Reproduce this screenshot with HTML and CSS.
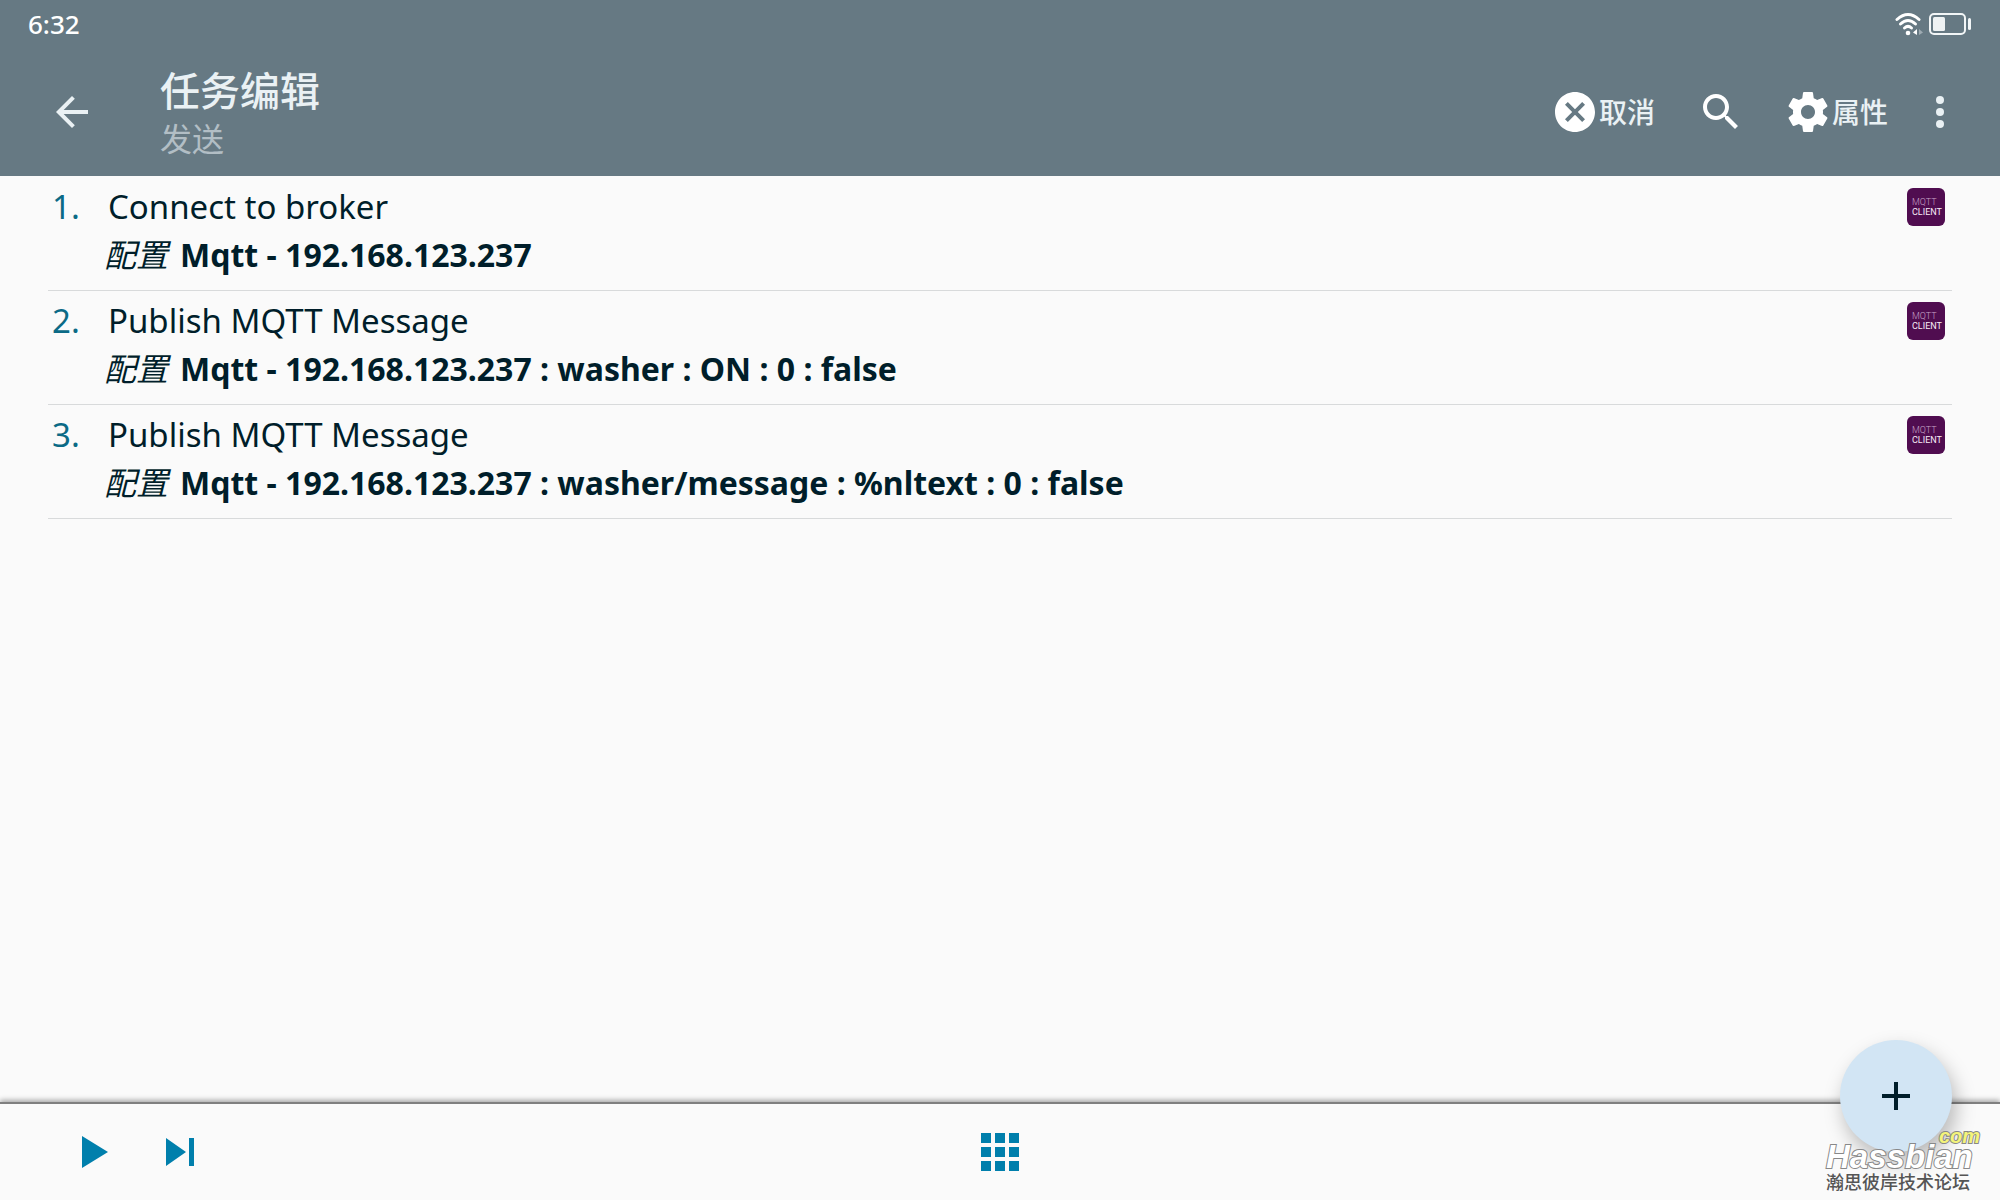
FILE: index.html
```html
<!DOCTYPE html>
<html lang="zh-CN">
<head>
<meta charset="utf-8">
<meta name="viewport" content="width=device-width, initial-scale=1">
<title>任务编辑</title>
<link rel="stylesheet" href="styles.css">
</head>
<body>
<header class="header">
  <div class="status">
    <time class="clock">6:32</time>
    <div class="status-icons">
      <svg class="wifi" width="28" height="24" viewBox="0 0 28 24" aria-hidden="true">
        <g fill="none" stroke="#fff" stroke-width="3" stroke-linecap="round">
          <path d="M2 7.500Q13 -2.500 24 7.500"/>
          <path d="M5.500 12Q13 5 20.500 12"/>
          <path d="M9.500 16Q13 12.800 16.500 16"/>
        </g>
        <circle cx="13" cy="21" r="2.300" fill="#fff"/>
        <path d="M18 20.500l4-3.500v6z" fill="#fff"/>
        <path d="M24 17l4 3.500-4 2.500z" fill="#9eabb2"/>
      </svg>
      <svg class="battery" width="43" height="24" viewBox="0 0 43 24" aria-hidden="true">
        <rect x="1" y="2" width="35" height="20" rx="4" fill="none" stroke="#f2f6f7" stroke-width="2"/>
        <rect x="4" y="5" width="12" height="14" rx="1.500" fill="#eef2f3"/>
        <rect x="39" y="6" width="3" height="12" rx="1.500" fill="#f2f6f7"/>
      </svg>
    </div>
  </div>
  <div class="toolbar">
    <button class="icon-btn back" aria-label="返回">
      <svg width="32" height="32" viewBox="4 4 16 16"><path fill="#eaf1f4" d="M20 11H7.830l5.590-5.590L12 4l-8 8 8 8 1.410-1.410L7.830 13H20z"/></svg>
    </button>
    <div class="titles">
      <h1 class="title">任务编辑</h1>
      <p class="subtitle">发送</p>
    </div>
    <nav class="actions">
      <button class="action">
        <svg width="40" height="40" viewBox="2 2 20 20" aria-hidden="true"><path fill="#fff" d="M12 2C6.470 2 2 6.470 2 12s4.470 10 10 10 10-4.470 10-10S17.530 2 12 2zm5 13.590L15.590 17 12 13.410 8.410 17 7 15.590 10.590 12 7 8.410 8.410 7 12 10.590 15.590 7 17 8.410 13.410 12z"/></svg>
        <span>取消</span>
      </button>
      <button class="action search" aria-label="搜索">
        <svg width="37" height="37" viewBox="3 3 18.500 18.500"><path fill="#fff" d="M15.500 14h-.79l-.28-.27C15.410 12.590 16 11.110 16 9.500 16 5.910 13.090 3 9.500 3S3 5.910 3 9.500 5.910 16 9.500 16c1.610 0 3.090-.59 4.230-1.570l.27.28v.79l5 4.990L20.490 19l-4.990-5zm-6 0C7.010 14 5 11.990 5 9.500S7.010 5 9.500 5 14 7.010 14 9.500 11.990 14 9.500 14z"/></svg>
      </button>
      <button class="action">
        <svg width="40" height="40" viewBox="2 2 20 20" aria-hidden="true"><path fill="#fff" d="M19.430 12.980c.04-.32.07-.64.07-.98s-.03-.66-.07-.98l2.110-1.650c.19-.15.24-.42.12-.64l-2-3.460c-.12-.22-.39-.3-.61-.22l-2.490 1c-.52-.4-1.080-.73-1.690-.98l-.38-2.650C14.460 2.180 14.250 2 14 2h-4c-.25 0-.46.18-.49.42l-.38 2.650c-.61.25-1.170.59-1.690.98l-2.490-1c-.23-.09-.49 0-.61.22l-2 3.460c-.13.22-.07.49.12.64l2.110 1.650c-.04.32-.07.65-.07.98s.03.66.07.98l-2.110 1.650c-.19.15-.24.42-.12.64l2 3.460c.12.22.39.3.61.22l2.490-1c.52.4 1.080.73 1.690.98l.38 2.650c.03.24.24.42.49.42h4c.25 0 .46-.18.49-.42l.38-2.650c.61-.25 1.170-.59 1.690-.98l2.490 1c.23.09.49 0 .61-.22l2-3.460c.12-.22.07-.49-.12-.64l-2.110-1.650zM12 15.500c-1.930 0-3.500-1.570-3.500-3.500s1.570-3.500 3.500-3.500 3.500 1.570 3.500 3.500-1.570 3.500-3.500 3.500z"/></svg>
        <span>属性</span>
      </button>
      <button class="action more" aria-label="更多">
        <svg width="8" height="32" viewBox="0 0 8 32"><g fill="#eaf1f4"><circle cx="4" cy="4" r="4"/><circle cx="4" cy="16" r="4"/><circle cx="4" cy="28" r="4"/></g></svg>
      </button>
    </nav>
  </div>
</header>

<main class="content">
  <ol class="tasks">
    <li class="task">
      <span class="num">1.</span>
      <div class="body">
        <p class="name">Connect to broker</p>
        <p class="detail"><em>配置</em><strong>Mqtt - 192.168.123.237</strong></p>
      </div>
      <div class="plugin"><span class="plugin-thin">MQTT</span><span>CLIENT</span></div>
    </li>
    <li class="task">
      <span class="num">2.</span>
      <div class="body">
        <p class="name">Publish MQTT Message</p>
        <p class="detail"><em>配置</em><strong>Mqtt - 192.168.123.237 : washer : ON : 0 : false</strong></p>
      </div>
      <div class="plugin"><span class="plugin-thin">MQTT</span><span>CLIENT</span></div>
    </li>
    <li class="task">
      <span class="num">3.</span>
      <div class="body">
        <p class="name">Publish MQTT Message</p>
        <p class="detail"><em>配置</em><strong>Mqtt - 192.168.123.237 : washer/message : %nltext : 0 : false</strong></p>
      </div>
      <div class="plugin"><span class="plugin-thin">MQTT</span><span>CLIENT</span></div>
    </li>
  </ol>
</main>

<footer class="bottom">
  <div class="playback">
    <button class="icon-btn" aria-label="运行">
      <svg width="26" height="32" viewBox="0 0 26 32"><path fill="#007fac" d="M0 0l26 16L0 32z"/></svg>
    </button>
    <button class="icon-btn" aria-label="单步">
      <svg width="28" height="28" viewBox="0 0 28 28"><path fill="#007fac" d="M0 0l20 14L0 28zM23 0h5v28h-5z"/></svg>
    </button>
  </div>
  <button class="icon-btn" aria-label="图标">
    <svg width="38" height="38" viewBox="0 0 38 38"><path fill="#007fac" d="M0 0h10v10H0zM14 0h10v10H14zM28 0h10v10H28zM0 14h10v10H0zM14 14h10v10H14zM28 14h10v10H28zM0 28h10v10H0zM14 28h10v10H14zM28 28h10v10H28z"/></svg>
  </button>
  <button class="fab" aria-label="添加">
    <svg width="28" height="28" viewBox="0 0 28 28"><path fill="#001e2a" d="M12 0h4v12h12v4H16v12h-4V16H0v-4h12z"/></svg>
  </button>
  <div class="watermark">
    <span class="mark-com">com</span>
    <span class="mark-name">Hassbian</span>
    <span class="mark-sub">瀚思彼岸技术论坛</span>
  </div>
</footer>
</body>
</html>
```
FILE: styles.css
```css
* {
  box-sizing: border-box;
}

body {
  margin: 0;
  min-height: 100vh;
  display: flex;
  flex-direction: column;
  background: #fafafa;
  color: #001e2a;
  font-family: "Noto Sans", "Noto Sans CJK SC", sans-serif;
}

h1,
p,
ol {
  margin: 0;
  padding: 0;
}

button {
  border: 0;
  padding: 0;
  background: none;
  color: inherit;
  font: inherit;
  cursor: pointer;
}

svg {
  display: block;
}

.header {
  background: #667983;
  color: #eaf1f4;
}

.status {
  display: flex;
  justify-content: space-between;
  align-items: center;
  height: 48px;
  padding: 0 28px;
  color: #fff;
}

.clock {
  font-size: 26px;
  font-weight: 500;
}

.status-icons {
  display: flex;
  gap: 6px;
}

.toolbar {
  display: flex;
  align-items: center;
  height: 128px;
  padding: 0 56px;
}

.icon-btn {
  display: flex;
}

.titles {
  flex: 1;
  margin-left: 72px;
  padding-top: 5px;
}

.title {
  font-size: 40px;
  font-weight: 500;
  line-height: 48px;
}

.subtitle {
  font-size: 32px;
  line-height: 48px;
  color: #b2bec5;
}

.actions {
  display: flex;
  align-items: center;
  gap: 48px;
}

.action {
  display: flex;
  align-items: center;
  gap: 4px;
  font-size: 28px;
  font-weight: 500;
  line-height: 40px;
}

.content {
  flex: 1;
  padding: 1px 48px 0;
}

.tasks {
  list-style: none;
}

.task {
  display: flex;
  align-items: flex-start;
  height: 114px;
  padding: 6px 7px 0 4px;
  border-bottom: 1px solid #d8dadb;
}

.num {
  width: 56px;
  font-size: 33px;
  line-height: 48px;
  color: #0b6a86;
}

.body {
  flex: 1;
}

.name {
  font-size: 33px;
  line-height: 48px;
}

.detail {
  display: flex;
  gap: 12px;
  margin-left: -4px;
  font-size: 32px;
  line-height: 48px;
}

.plugin {
  display: flex;
  flex-direction: column;
  justify-content: center;
  width: 38px;
  height: 38px;
  margin-top: 5px;
  padding-left: 5px;
  border-radius: 6px;
  background: #500d50;
  color: #f6ecf6;
  font-family: Roboto, sans-serif;
  font-size: 9px;
  line-height: 10px;
}

.plugin-thin {
  font-weight: 300;
  color: #c9a6c9;
}

.bottom {
  position: relative;
  display: grid;
  grid-template-columns: 1fr auto 1fr;
  align-items: center;
  height: 98px;
  padding: 0 82px;
  border-top: 2px solid #7f7f7f;
  box-shadow: 0 -2px 5px #0005;
}

.playback {
  display: flex;
  align-items: center;
  gap: 58px;
}

.fab {
  position: absolute;
  right: 48px;
  top: -64px;
  display: grid;
  place-items: center;
  width: 112px;
  height: 112px;
  border-radius: 50%;
  background: #d2e5f4;
  box-shadow: 4px 10px 20px #0004;
}

.watermark {
  position: absolute;
  right: 20px;
  bottom: 6px;
  display: flex;
  flex-direction: column;
  width: 154px;
  font-family: "Liberation Sans", "Noto Sans CJK SC", sans-serif;
  font-weight: 700;
}

.mark-com,
.mark-name {
  font-style: italic;
  -webkit-text-stroke: 2px #888;
  paint-order: stroke fill;
}

.mark-com {
  align-self: flex-end;
  font-size: 20px;
  line-height: 12px;
  color: #f4f47a;
}

.mark-name {
  font-size: 33px;
  line-height: 30px;
  color: #fff;
}

.mark-sub {
  font-size: 18px;
  font-weight: 500;
  line-height: 22px;
  color: #555;
}
```
